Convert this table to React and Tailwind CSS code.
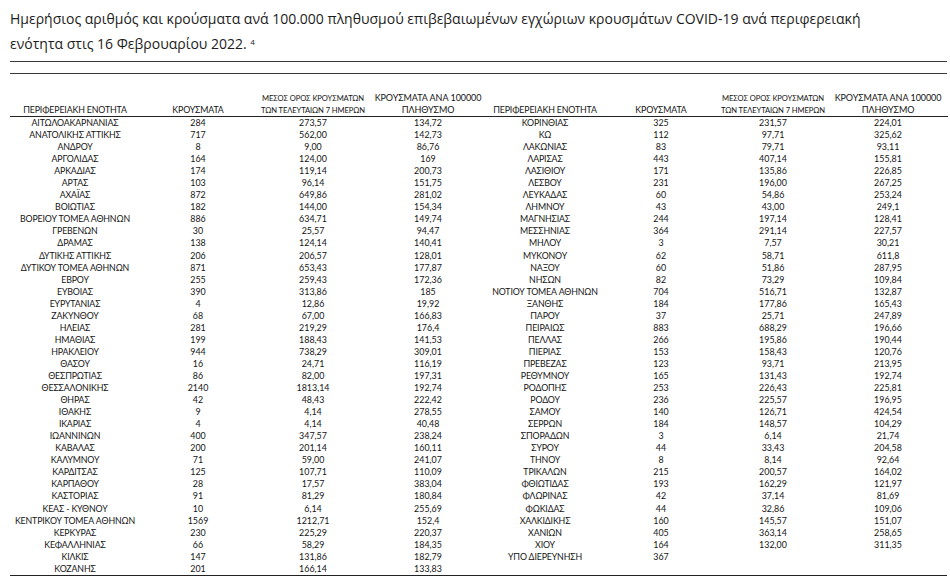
import React from 'react';

const LEFT_ROWS = [
    ['ΑΙΤΩΛΟΑΚΑΡΝΑΝΙΑΣ', '284', '273,57', '134,72'],
    ['ΑΝΑΤΟΛΙΚΗΣ ΑΤΤΙΚΗΣ', '717', '562,00', '142,73'],
    ['ΑΝΔΡΟΥ', '8', '9,00', '86,76'],
    ['ΑΡΓΟΛΙΔΑΣ', '164', '124,00', '169'],
    ['ΑΡΚΑΔΙΑΣ', '174', '119,14', '200,73'],
    ['ΑΡΤΑΣ', '103', '96,14', '151,75'],
    ['ΑΧΑΪΑΣ', '872', '649,86', '281,02'],
    ['ΒΟΙΩΤΙΑΣ', '182', '144,00', '154,34'],
    ['ΒΟΡΕΙΟΥ ΤΟΜΕΑ ΑΘΗΝΩΝ', '886', '634,71', '149,74'],
    ['ΓΡΕΒΕΝΩΝ', '30', '25,57', '94,47'],
    ['ΔΡΑΜΑΣ', '138', '124,14', '140,41'],
    ['ΔΥΤΙΚΗΣ ΑΤΤΙΚΗΣ', '206', '206,57', '128,01'],
    ['ΔΥΤΙΚΟΥ ΤΟΜΕΑ ΑΘΗΝΩΝ', '871', '653,43', '177,87'],
    ['ΕΒΡΟΥ', '255', '259,43', '172,36'],
    ['ΕΥΒΟΙΑΣ', '390', '313,86', '185'],
    ['ΕΥΡΥΤΑΝΙΑΣ', '4', '12,86', '19,92'],
    ['ΖΑΚΥΝΘΟΥ', '68', '67,00', '166,83'],
    ['ΗΛΕΙΑΣ', '281', '219,29', '176,4'],
    ['ΗΜΑΘΙΑΣ', '199', '188,43', '141,53'],
    ['ΗΡΑΚΛΕΙΟΥ', '944', '738,29', '309,01'],
    ['ΘΑΣΟΥ', '16', '24,71', '116,19'],
    ['ΘΕΣΠΡΩΤΙΑΣ', '86', '82,00', '197,31'],
    ['ΘΕΣΣΑΛΟΝΙΚΗΣ', '2140', '1813,14', '192,74'],
    ['ΘΗΡΑΣ', '42', '48,43', '222,42'],
    ['ΙΘΑΚΗΣ', '9', '4,14', '278,55'],
    ['ΙΚΑΡΙΑΣ', '4', '4,14', '40,48'],
    ['ΙΩΑΝΝΙΝΩΝ', '400', '347,57', '238,24'],
    ['ΚΑΒΑΛΑΣ', '200', '201,14', '160,11'],
    ['ΚΑΛΥΜΝΟΥ', '71', '59,00', '241,07'],
    ['ΚΑΡΔΙΤΣΑΣ', '125', '107,71', '110,09'],
    ['ΚΑΡΠΑΘΟΥ', '28', '17,57', '383,04'],
    ['ΚΑΣΤΟΡΙΑΣ', '91', '81,29', '180,84'],
    ['ΚΕΑΣ - ΚΥΘΝΟΥ', '10', '6,14', '255,69'],
    ['ΚΕΝΤΡΙΚΟΥ ΤΟΜΕΑ ΑΘΗΝΩΝ', '1569', '1212,71', '152,4'],
    ['ΚΕΡΚΥΡΑΣ', '230', '225,29', '220,37'],
    ['ΚΕΦΑΛΛΗΝΙΑΣ', '66', '58,29', '184,35'],
    ['ΚΙΛΚΙΣ', '147', '131,86', '182,79'],
    ['ΚΟΖΑΝΗΣ', '201', '166,14', '133,83'],
];

const RIGHT_ROWS = [
    ['ΚΟΡΙΝΘΙΑΣ', '325', '231,57', '224,01'],
    ['ΚΩ', '112', '97,71', '325,62'],
    ['ΛΑΚΩΝΙΑΣ', '83', '79,71', '93,11'],
    ['ΛΑΡΙΣΑΣ', '443', '407,14', '155,81'],
    ['ΛΑΣΙΘΙΟΥ', '171', '135,86', '226,85'],
    ['ΛΕΣΒΟΥ', '231', '196,00', '267,25'],
    ['ΛΕΥΚΑΔΑΣ', '60', '54,86', '253,24'],
    ['ΛΗΜΝΟΥ', '43', '43,00', '249,1'],
    ['ΜΑΓΝΗΣΙΑΣ', '244', '197,14', '128,41'],
    ['ΜΕΣΣΗΝΙΑΣ', '364', '291,14', '227,57'],
    ['ΜΗΛΟΥ', '3', '7,57', '30,21'],
    ['ΜΥΚΟΝΟΥ', '62', '58,71', '611,8'],
    ['ΝΑΞΟΥ', '60', '51,86', '287,95'],
    ['ΝΗΣΩΝ', '82', '73,29', '109,84'],
    ['ΝΟΤΙΟΥ ΤΟΜΕΑ ΑΘΗΝΩΝ', '704', '516,71', '132,87'],
    ['ΞΑΝΘΗΣ', '184', '177,86', '165,43'],
    ['ΠΑΡΟΥ', '37', '25,71', '247,89'],
    ['ΠΕΙΡΑΙΩΣ', '883', '688,29', '196,66'],
    ['ΠΕΛΛΑΣ', '266', '195,86', '190,44'],
    ['ΠΙΕΡΙΑΣ', '153', '158,43', '120,76'],
    ['ΠΡΕΒΕΖΑΣ', '123', '93,71', '213,95'],
    ['ΡΕΘΥΜΝΟΥ', '165', '131,43', '192,74'],
    ['ΡΟΔΟΠΗΣ', '253', '226,43', '225,81'],
    ['ΡΟΔΟΥ', '236', '225,57', '196,95'],
    ['ΣΑΜΟΥ', '140', '126,71', '424,54'],
    ['ΣΕΡΡΩΝ', '184', '148,57', '104,29'],
    ['ΣΠΟΡΑΔΩΝ', '3', '6,14', '21,74'],
    ['ΣΥΡΟΥ', '44', '33,43', '204,58'],
    ['ΤΗΝΟΥ', '8', '8,14', '92,64'],
    ['ΤΡΙΚΑΛΩΝ', '215', '200,57', '164,02'],
    ['ΦΘΙΩΤΙΔΑΣ', '193', '162,29', '121,97'],
    ['ΦΛΩΡΙΝΑΣ', '42', '37,14', '81,69'],
    ['ΦΩΚΙΔΑΣ', '44', '32,86', '109,06'],
    ['ΧΑΛΚΙΔΙΚΗΣ', '160', '145,57', '151,07'],
    ['ΧΑΝΙΩΝ', '405', '363,14', '258,65'],
    ['ΧΙΟΥ', '164', '132,00', '311,35'],
    ['ΥΠΟ ΔΙΕΡΕΥΝΗΣΗ', '367', '', ''],
    ['', '', '', ''],
];

const GRID = 'grid grid-cols-[130px_116px_114px_116px_118px_114px_110px_120px]';
const CAPS = 'text-[8.8px] tracking-[-0.15px]';

function HeaderCells() {
    return (
        <>
            <div className={CAPS}>ΠΕΡΙΦΕΡΕΙΑΚΗ ΕΝΟΤΗΤΑ</div>
            <div className={CAPS}>ΚΡΟΥΣΜΑΤΑ</div>
            <div className="text-[7.6px] tracking-[-0.1px]">
                ΜΕΣΟΣ ΟΡΟΣ ΚΡΟΥΣΜΑΤΩΝ<br />ΤΩΝ ΤΕΛΕΥΤΑΙΩΝ 7 ΗΜΕΡΩΝ
            </div>
            <div className="text-[9px] tracking-[-0.1px]">
                ΚΡΟΥΣΜΑΤΑ ΑΝΑ 100000<br />ΠΛΗΘΥΣΜΟ
            </div>
        </>
    );
}

export default function App() {
    return (
        <div className="w-[950px] h-[578px] overflow-hidden bg-white pl-[10px] pr-[2px] pt-[6px] text-[#141414]">
            {/* Title */}
            <p className="font-['Open_Sans',sans-serif] text-[14px] leading-[25px] text-[#1c1c1c]">
                <span className="block whitespace-nowrap">
                    Ημερήσιος αριθμός και κρούσματα ανά 100.000 πληθυσμού επιβεβαιωμένων εγχώριων κρουσμάτων COVID-19 ανά περιφερειακή
                </span>
                <span className="block whitespace-nowrap">
                    ενότητα στις 16 Φεβρουαρίου 2022. <sup className="text-[8px]">4</sup>
                </span>
            </p>

            <div className="mt-[5px] h-px w-[937px] bg-[#3a3a3a]"></div>
            <div className="mt-[11px] h-px w-[937px] bg-[#3a3a3a]"></div>

            {/* Table */}
            <div className="font-['Lato',sans-serif] text-[8.9px] text-center whitespace-nowrap">
                <div className={`${GRID} h-[43px] items-end leading-[12px] border-b border-[#222]`}>
                    <HeaderCells />
                    <HeaderCells />
                </div>
                {LEFT_ROWS.map((row, i) => (
                    <div key={i} className={`${GRID} h-[12.05px] leading-[12px]`}>
                        {row.concat(RIGHT_ROWS[i]).map((cell, j) => (
                            <div key={j} className={j % 4 === 0 ? CAPS : ''}>{cell}</div>
                        ))}
                    </div>
                ))}
                <div className="h-px w-[937px] bg-[#222]"></div>
            </div>
        </div>
    );
}
